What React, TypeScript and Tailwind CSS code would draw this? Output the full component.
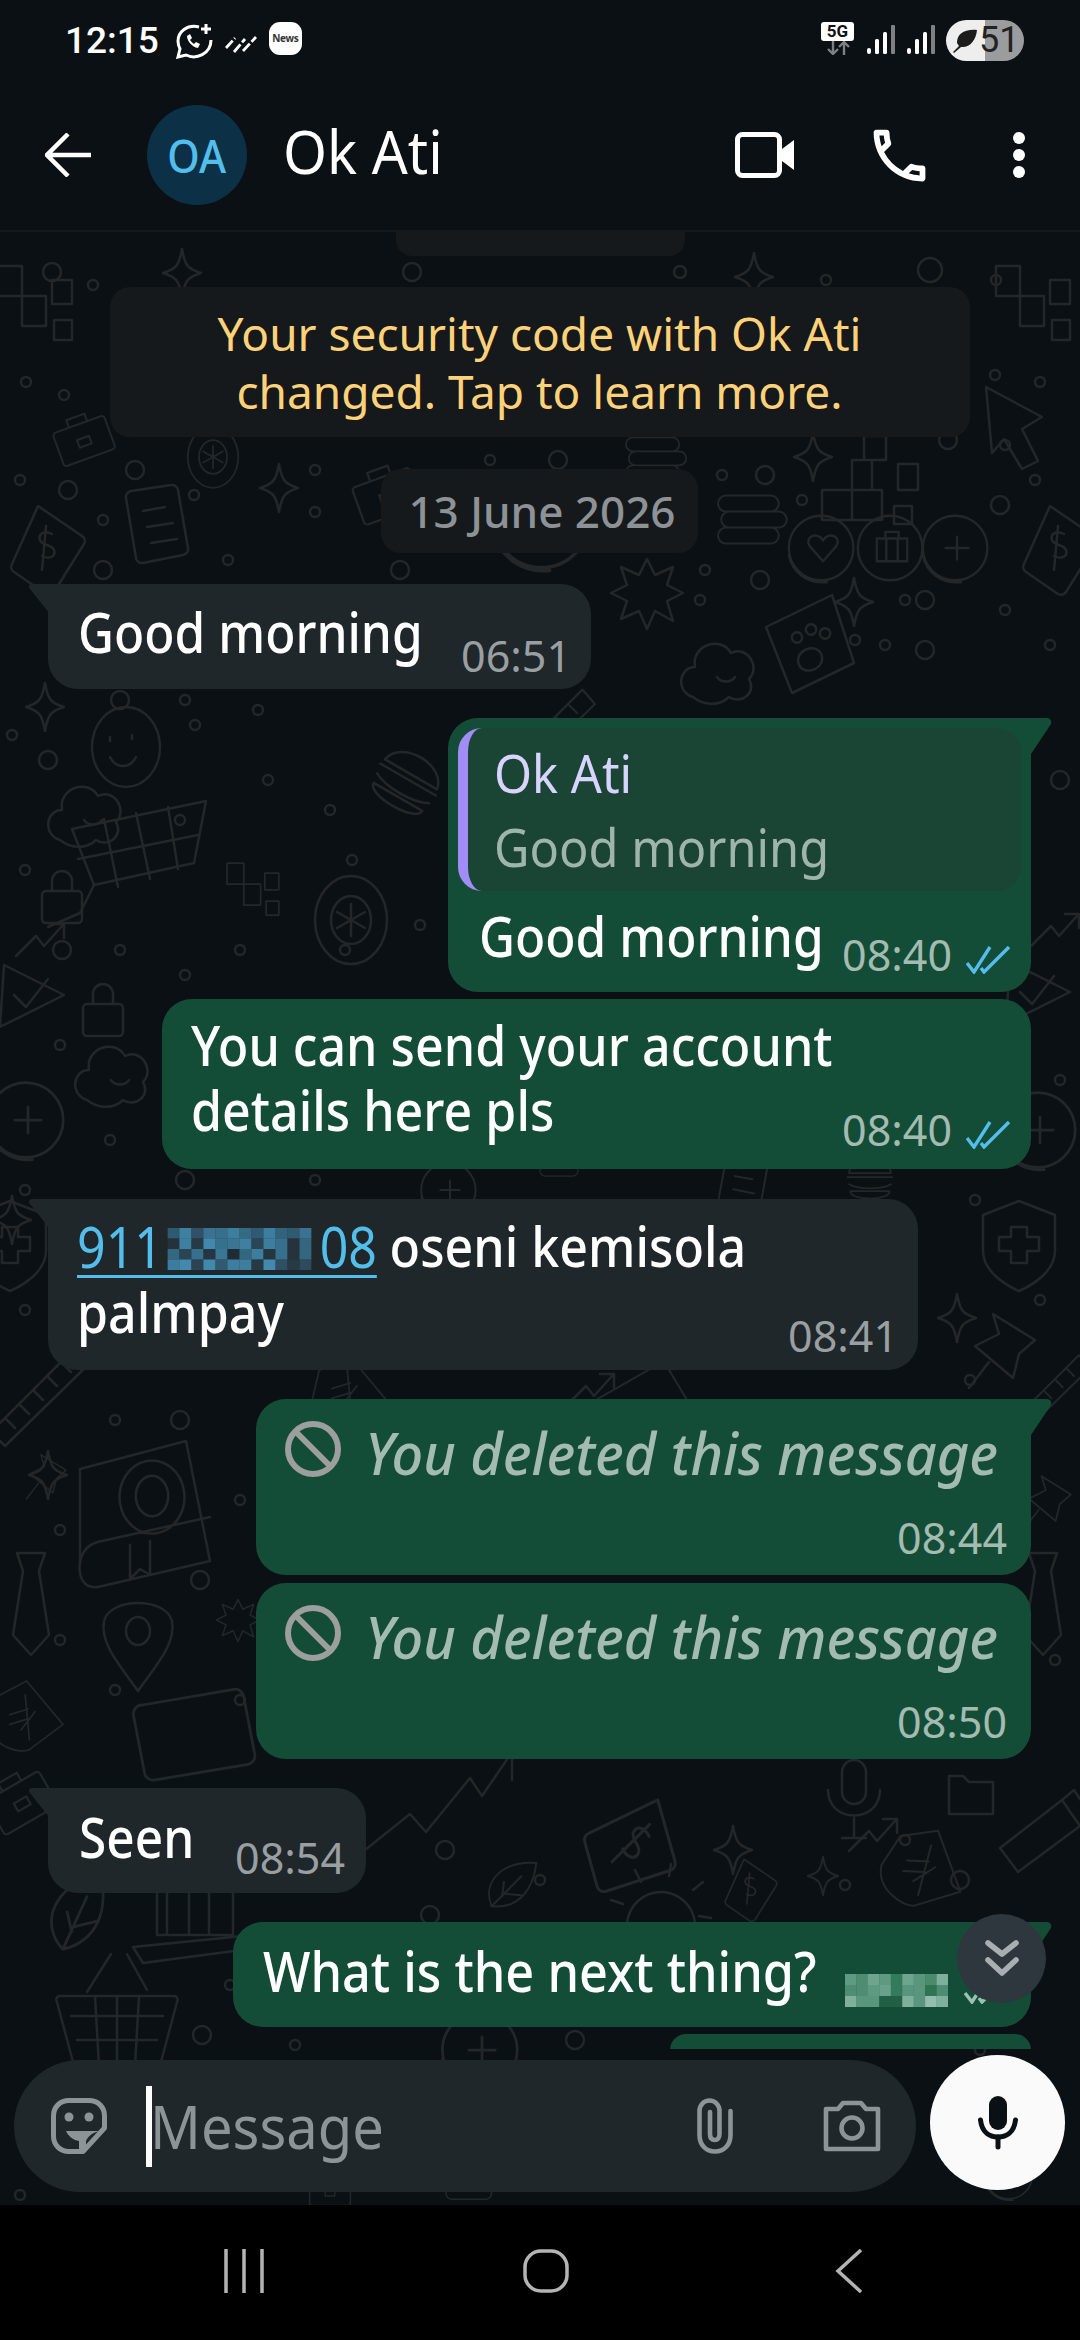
import React from "react";
import { MdOutlineCall } from "react-icons/md";

const FONT = "font-['Noto_Sans','Open_Sans',sans-serif]";

// wallpaper pieces, each drawn around 0,0
const shapes: Record<string, React.ReactNode> = {
  star: <path d="M0-24C3-7 6-4 19 0 6 4 3 7 0 24-3 7-6 4-19 0-6-4-3-7 0-24Z" />,
  burst: <path d="M0-34 8-18 26-26 20-8 36 0 20 8 26 28 8 18 0 36-8 18-26 26-20 8-36 0-20-8-26-26-8-18Z" />,
  steps: <path d="M-30-34h24v30h24v30h-24v-30h-24ZM24-20h20v24h-20ZM26 20h18v20h-18Z" />,
  cluster: <path d="M-46 10h30v30h-30ZM-16 10h30v30h-30ZM-16-20h20v30h-20ZM-4-44h22v24h-22ZM30-16h20v26h-20ZM26 26h18v18h-18Z" />,
  cursor: <path d="M-26-40 30-10 10 2 26 34 10 42-8 12-20 26Z" />,
  case: <path d="M-30-18h60a4 4 0 0 1 4 4v36a4 4 0 0 1-4 4h-60a4 4 0 0 1-4-4v-36a4 4 0 0 1 4-4ZM-12-18v-10h24v10M-8 0h16v10h-16Z" />,
  note: <path d="M-24-34 16-40a6 6 0 0 1 7 5l10 58a6 6 0 0 1-5 7L-12 38a6 6 0 0 1-7-5l-10-60a6 6 0 0 1 5-7ZM-12-14l22-4M-8 2l26-4M-4 18l26-4" />,
  tag: <path d="M-10-44 34-14a6 6 0 0 1 2 8L6 42a6 6 0 0 1-8 2L-34 22a6 6 0 0 1-2-8ZM4-16c-8-4-14 0-12 6s12 4 14 10-4 10-12 6M-2-24-6 20" />,
  coin: <path d="M-36 0a34 34 0 1 0 68 0a34 34 0 1 0-68 0ZM-36 8c4 18 20 30 40 28M-12 0h24M0-12v24" />,
  coinHeart: <path d="M-36 0a34 34 0 1 0 68 0a34 34 0 1 0-68 0ZM-36 8c4 18 20 30 40 28M0 14-14-2c-6-10 8-16 14-6 6-10 20-4 14 6Z" />,
  coinCase: <path d="M-36 0a34 34 0 1 0 68 0a34 34 0 1 0-68 0ZM-16-10h32v24h-32ZM-7-10v-7h14v7M-6-10v24M6-10v24" />,
  stack: <path d="M-30-28h56a10 10 0 0 1 0 20h-56a10 10 0 0 1 0-20ZM-26-8h62a10 10 0 0 1 0 20h-62a10 10 0 0 1 0-20ZM-30 12h56a10 10 0 0 1 0 20h-56a10 10 0 0 1 0-20Z" />,
  paw: <path d="M-40-20 26-52 48 16-14 46ZM-8 14c0-14 22-18 24-4s-22 20-24 4ZM-14-8a5 5 0 1 0 10-3a5 5 0 1 0-10 3ZM0-16a5 5 0 1 0 10-3a5 5 0 1 0-10 3ZM14-12a5 5 0 1 0 10-3a5 5 0 1 0-10 3Z" />,
  cloud: <path d="M-30 30c-18-6-14-30 2-30-4-22 26-32 36-14 16-8 30 14 18 26 8 14-8 26-20 18-10 10-26 8-36 0ZM-6 10c4 6 14 6 18 0" />,
  smile: <path d="M-32 0a34 40 0 1 0 68 0a34 40 0 1 0-68 0ZM-14-10v4M8-12v4M-14 10c6 12 20 12 26 0" />,
  cart: <path d="M-66-14 68-42 56 20-44 42ZM-34-24-20 44M-2-30 12 36M30-36 40 26M-60 16 60-8M-44 42-58 70M-58 70-90 84" />,
  flower: <path d="M-36 0a36 44 0 1 0 72 0a36 44 0 1 0-72 0ZM-20 0a20 24 0 1 0 40 0a20 24 0 1 0-40 0ZM0-16V16M-14-8 14 8M-14 8 14-8" />,
  lock: <path d="M-16-6h32a4 4 0 0 1 4 4v24a4 4 0 0 1-4 4h-32a4 4 0 0 1-4-4v-24a4 4 0 0 1 4-4ZM-10-6v-10a10 10 0 0 1 20 0v10" />,
  check: <path d="M-30-28 30 2M-30-28-34 34 30 2M-20 2-8 14 14-14" />,
  shield: <path d="M0-44 36-30V6C36 26 14 40 0 46-14 40-36 26-36 6V-30ZM-8-18h16v10h12v14h-12v12h-16v-12h-12v-14h12Z" />,
  pin: <path d="M-12-34 30-8 14 6 8 30-30-2-6-14ZM-16 14-36 40" />,
  ruler: <path d="M-50 30 36-56 50-40-36 44ZM-36 16l10 10M-22 2l10 10M-8-12 2-2M6-26l10 10M20-40l10 10" />,
  book: <path d="M-58-48 48-76 72 44-40 70C-54 72-60 60-58 46ZM-58 46C-56 32-48 26-36 24L72 0M-18-14a32 36 0 1 0 64-12a32 36 0 1 0-64 12ZM-2-18a16 20 0 1 0 32-6a16 20 0 1 0-32 6ZM-8 28v34l10-10 10 6V24" />,
  tie: <path d="M-14-44H14L8-26 18 38 0 58-18 38-8-26Z" />,
  loc: <path d="M0 48C-20 20-38 0-34-22-28-46 28-46 34-22 38 0 20 20 0 48ZM-12-12a12 14 0 1 0 24 0a12 14 0 1 0-24 0Z" />,
  basket: <path d="M-58-16H58a4 4 0 0 1 2 6L44 50a6 6 0 0 1-6 4H-38a6 6 0 0 1-6-4L-60-10a4 4 0 0 1 2-6ZM-46 4H46M-40 28H40M-22-16-18 54M22-16 18 54M0-16V54M-30-20-6-58M30-22 10-58" />,
  zig: <path d="M-80 46-30 6-14 24 30-30 42-12 68-50M48-52H72V-28" />,
  arrow: <path d="M-24 16-4-4 4 6 22-14M10-16H24V-2" />,
  bag: <path d="M-44-28-2-50 50 12 2 48C-10 54-50 46-54 14Z M10 -6-10 20M-4-30 2 34M-26-2l26-8M-26 12l26-8" />,
  leaf: <path d="M-12 34C-34 10-20-24 22-36 30-2 20 26-12 34ZM-12 34 10-14M-4 14 20 8M-8 0-4 18" />,
  laptop: <path d="M-36-42H40V12H-36ZM-60 24 60 12 56 26-50 40Z M-26-30V12M-4-34V12M16-36V12" />,
  gear: <path d="M-30 30A34 34 0 1 1 30 30M-14 30A14 14 0 1 1 14 30M-38-8l-12-4M-20-30l-6-12M8-36l2-12M32-22 42-30M38 4l12 2" />,
  mic: <path d="M-12-26a12 12 0 0 1 24 0v20a12 12 0 0 1-24 0ZM-26-8c0 34 52 34 52 0M0 20V40M-12 40H12" />,
  folder: <path d="M-22-18h14l6 6h24v32h-44Z" />,
  bottle: <path d="M-40 14 22-34 40-8-22 38ZM22-34 34-44 50-20 40-8" />,
  burger: <path d="M-30-10C-26-36 26-36 30-10ZM-32-4H32M-30 6C-16 14 16 14 30 6M-28 16H28C28 30-28 30-28 16Z" />,
  card: <path d="M-46-20 36-34a8 8 0 0 1 10 6L56 24a8 8 0 0 1-6 10L-34 48a8 8 0 0 1-10-6L-54-10a8 8 0 0 1 8-10Z" />,
};

const doodles: [string, number, number, number?, number?][] = [
  ["steps", 28, 300], ["steps", 1026, 300], ["star", 182, 273], ["star", 754, 277], ["star", 813, 457], ["star", 279, 488],
  ["star", 854, 602], ["star", 45, 707], ["star", 12, 1220], ["star", 957, 1318], ["star", 48, 1475], ["star", 733, 1850],
  ["star", 823, 1876, 0.8],
  ["cluster", 868, 480], ["cursor", 1012, 427], ["case", 83, 438, 0.8, -20], ["note", 155, 525], ["tag", 48, 550],
  ["tag", 1060, 550], ["coinHeart", 823, 548, 0.95], ["coinCase", 892, 548, 0.95], ["coin", 957, 548, 0.95],
  ["stack", 750, 518, 0.8], ["stack", 654, 457, 0.7], ["burst", 647, 593], ["paw", 806, 647], ["cloud", 723, 667],
  ["coin", 544, 520, 1.4], ["case", 386, 493, 0.9, -20], ["flower", 213, 457, 0.7],
  ["smile", 124, 747], ["cloud", 90, 810], ["cart", 138, 843], ["flower", 351, 920], ["burger", 406, 783, 1, 30],
  ["steps", 248, 887, 0.7], ["lock", 62, 897], ["lock", 103, 1010], ["check", 34, 993], ["cloud", 117, 1070],
  ["coin", 28, 1120, 1.1], ["coin", 1040, 1130, 1.1], ["arrow", 40, 940], ["arrow", 1055, 930], ["check", 1040, 990],
  ["shield", 10, 1245], ["shield", 1019, 1245], ["pin", 1005, 1348], ["ruler", 41, 1402], ["book", 138, 1517],
  ["tie", 31, 1597], ["tie", 1043, 1597], ["loc", 138, 1643], ["burst", 238, 1620, 0.6], ["ruler", 1050, 1400, 0.8],
  ["pin", 48, 1475, 0.6], ["card", 193, 1727, 1.1], ["bag", 28, 1716, 0.7], ["pin", 1050, 1500, 0.7],
  ["zig", 440, 1808], ["tag", 633, 1848, 1.2, 40], ["bag", 926, 1869, 0.8, 20], ["basket", 117, 2012], ["leaf", 76, 1912, 1.1],
  ["laptop", 193, 1923], ["mic", 854, 1798], ["gear", 661, 1912], ["leaf", 510, 1884, 0.8, 20], ["tag", 751, 1890, 0.7],
  ["folder", 971, 1794], ["bottle", 1040, 1834], ["coin", 482, 2050, 1.1], ["case", 20, 1800, 0.9, -30], ["arrow", 873, 1835],
  ["case", 330, 2190, 0.6], ["stack", 470, 2180, 0.6], ["coin", 1010, 2175, 0.7], ["stack", 560, 1160, 0.5],
  ["burger", 870, 1180, 0.7], ["note", 740, 1190, 0.8, 20], ["card", 640, 1400, 0.8, -20], ["bag", 350, 1390, 0.7],
  ["arrow", 590, 1390], ["ruler", 550, 740, 0.9], ["check", 380, 1040, 0.7], ["coin", 450, 1190, 0.8],
];

const dots: [number, number, number][] = [
  [52, 272, 9], [93, 285, 5], [412, 272, 9], [680, 272, 6], [826, 280, 5], [930, 270, 12], [996, 280, 5], [26, 382, 5], [64, 395, 5],
  [995, 375, 5], [1040, 382, 5], [948, 440, 9], [1005, 445, 5], [20, 480, 5], [68, 490, 9], [135, 470, 9], [194, 495, 5],
  [315, 470, 5], [490, 460, 5], [558, 460, 9], [722, 475, 5], [765, 475, 9], [1035, 480, 5], [103, 520, 5], [315, 512, 5],
  [802, 500, 5], [1000, 505, 9], [390, 520, 5], [228, 560, 5], [400, 570, 9], [103, 570, 9], [760, 580, 9], [705, 570, 5], [905, 600, 5], [925, 600, 9],
  [1005, 610, 5], [1050, 645, 5], [885, 645, 5], [925, 650, 9], [855, 640, 5], [700, 600, 5], [120, 700, 9], [185, 700, 5], [258, 710, 5],
  [48, 760, 9], [12, 735, 5], [195, 725, 5], [330, 810, 5], [352, 860, 5], [268, 780, 5], [180, 820, 5], [345, 950, 5], [25, 870, 5], [62, 950, 9],
  [1010, 800, 5], [1060, 780, 9], [420, 925, 5], [185, 975, 5], [120, 950, 5], [340, 1020, 9], [240, 950, 5], [1060, 1080, 5], [60, 1045, 5],
  [110, 1140, 5], [185, 1180, 9], [315, 1180, 5], [25, 1190, 5], [975, 1200, 5], [1040, 1300, 5], [25, 1310, 5], [970, 1380, 5],
  [115, 1420, 5], [180, 1420, 9], [60, 1530, 5], [240, 1500, 5], [200, 1580, 9], [60, 1640, 5], [240, 1700, 5], [115, 1690, 5], [1055, 1660, 5],
  [445, 1850, 9], [540, 1880, 5], [905, 1840, 5], [845, 1885, 5], [230, 1985, 5], [202, 2035, 9], [295, 2045, 5], [430, 1915, 9],
  [490, 2010, 9], [575, 2040, 9], [960, 1880, 9], [980, 2050, 5], [20, 2195, 5],
];

function Wallpaper() {
  return (
    <svg className="absolute inset-0 h-full w-full" viewBox="0 232 1080 1973" fill="none" stroke="#23272a" strokeWidth="2.5" strokeLinejoin="round" strokeLinecap="round">
      {doodles.map(([name, x, y, s = 1, r = 0], i) => (
        <g key={i} transform={`translate(${x} ${y}) rotate(${r}) scale(${s})`}>{shapes[name]}</g>
      ))}
      {dots.map(([x, y, r], i) => (
        <circle key={i} cx={x} cy={y} r={r} />
      ))}
    </svg>
  );
}

function Mosaic({ w, h, grid }: { w: number; h: number; grid: string[][] }) {
  return (
    <svg width={w} height={h} viewBox={`0 0 ${grid[0].length} ${grid.length}`} preserveAspectRatio="none" className="block shrink-0">
      {grid.map((row, r) => row.map((fill, c) => <rect key={`${r}-${c}`} x={c} y={r} width="1.02" height="1.02" fill={fill} />))}
    </svg>
  );
}

const phoneBlur = [
  ["#2e5a70", "#3f80a0", "#2f5066", "#3a7291", "#37708c", "#3d7e9f", "#356a84", "#2f5a73", "#3d7e9f", "#33627c", "#2f5a70", "#3a7290"],
  ["#26323b", "#3f80a0", "#263a45", "#4288ad", "#37708c", "#3a7594", "#3f7f9f", "#2a4656", "#3d7e9f", "#37708c", "#26333c", "#35667f"],
  ["#336880", "#2b4453", "#37708c", "#263541", "#3a7594", "#1f2c33", "#33667f", "#3d7e9f", "#26363f", "#37708c", "#26333c", "#35667f"],
  ["#3a7da0", "#4289ad", "#2b4453", "#4389ad", "#2f5a70", "#3d7e9f", "#3d7e9f", "#263a45", "#4389ad", "#2f5064", "#263a45", "#2c4c5c"],
];

const timeBlur = [
  ["#5f9a82", "#4f8c72", "#6fa58e", "#5e9a81", "#347a5c", "#6fa58e", "#5a967d", "#4a8a6d", "#7fb09b"],
  ["#4f8c72", "#4f8c72", "#5e9a81", "#6aa18a", "#347a5c", "#5a967d", "#5a967d", "#2f7355", "#4f8c72"],
  ["#7fb09b", "#5a967d", "#5a967d", "#235f45", "#235f45", "#7fb09b", "#5a967d", "#93bdac", "#7fb09b"],
];

function Ticks({ color = "#53bdeb" }: { color?: string }) {
  return (
    <svg width="44" height="28" viewBox="0 0 44 28" fill="none" stroke={color} strokeWidth="3.4" className="ml-[14px] mb-[2px]">
      <path d="M1 17 8 26 24 1" />
      <path d="M15 22 18 26 43 1" />
    </svg>
  );
}

function Time({ children, out = false }: { children: React.ReactNode; out?: boolean }) {
  return <span className={`text-[43px] leading-[42px] whitespace-nowrap ${out ? "text-[#a3bbb0]" : "text-[#9a9fa2]"}`}>{children}</span>;
}

function InTail() {
  return (
    <svg width="24" height="34" viewBox="0 0 24 34" className="absolute left-[-19px] top-0" fill="#1f272a">
      <path d="M24 0H3C0 0-1 3 1 5L24 34Z" />
    </svg>
  );
}

function OutTail() {
  return (
    <svg width="24" height="36" viewBox="0 0 24 36" className="absolute right-[-21px] top-0" fill="#144d37">
      <path d="M0 0H19C22 0 24 3 23 6L3 36H0Z" />
    </svg>
  );
}

// message text: the phone's face is narrower than Noto Sans, so squeeze it a little
function Msg({ children, className = "", wide = false }: { children: React.ReactNode; className?: string; wide?: boolean }) {
  return <div className={`shrink-0 origin-left whitespace-nowrap text-[56px] font-medium ${wide ? "scale-x-[0.895]" : "scale-x-[0.885]"} ${className}`}>{children}</div>;
}

function Deleted({ time, tail }: { time: string; tail?: boolean }) {
  return (
    <div className={`relative h-[176px] w-[775px] self-end rounded-[30px] bg-[#144d37] pl-[28px] pt-[21px] ${tail ? "rounded-tr-none" : ""}`}>
      {tail && <OutTail />}
      <div className="flex items-start">
        <svg width="58" height="58" viewBox="0 0 58 58" fill="none" stroke="#9d9f9e" strokeWidth="6" className="shrink-0">
          <circle cx="29" cy="29" r="25" />
          <path d="M11 11 47 47" />
        </svg>
        <div className="ml-[23px] w-[632px] origin-left scale-x-[0.96] whitespace-nowrap text-[58px] leading-[68px] font-medium italic text-[#a3bbb0] mt-[-1px]">You deleted this message</div>
      </div>
      <div className="absolute bottom-[15px] right-[24px]">
        <Time out>{time}</Time>
      </div>
    </div>
  );
}

function StatusBar() {
  return (
    <div className="flex h-[76px] items-start pt-[22px] pl-[65px] pr-[56px] text-white">
      <span className="font-['Roboto',sans-serif] text-[37px] leading-[38px] font-medium">12:15</span>
      <svg width="38" height="36" viewBox="0 0 38 36" fill="none" stroke="#fff" strokeWidth="3" className="ml-[16px] mt-[1px]">
        <path d="M24 4C12 1 3 9 3 18c0 3 1 6 2 8l-2 8 8-2c10 5 25-1 25-15" />
        <path d="M31 1v10M26 6h10" />
        <path d="M12 13c0 5 5 11 11 12l2-4-4-2-2 2c-2-1-3-3-4-4l2-2-2-4Z" fill="#fff" stroke="none" />
      </svg>
      <svg width="32" height="18" viewBox="0 0 32 18" stroke="#fff" strokeWidth="2.8" strokeDasharray="10 2.5" className="ml-[12px] mt-[13px]">
        <path d="M1 13 10 3M9 17 20 4M18 16 31 2" />
      </svg>
      <div className="ml-[12px] flex h-[33px] w-[33px] items-center justify-center rounded-[11px] bg-white text-[10px] font-bold tracking-[-0.3px] text-[#333]">News</div>
      <div className="ml-auto flex items-start">
        <div className="flex w-[33px] flex-col items-center">
          <span className="flex h-[19px] w-[33px] items-center justify-center rounded-[3px] bg-white font-['Roboto',sans-serif] text-[17px] leading-[19px] font-bold text-[#111]">5G</span>
          <svg width="24" height="14" viewBox="0 0 24 14" fill="none" stroke="#7e8183" strokeWidth="2.4">
            <path d="M7 0V13M2 8l5 5 5-5M18 14V1M13 6l5-5 5 5" />
          </svg>
        </div>
        {[0, 1].map((i) => (
          <svg key={i} width="28" height="30" viewBox="0 0 28 30" className={`mt-[3px] ${i === 0 ? "ml-[13px]" : "ml-[12px]"}`}>
            <rect x="0" y="23" width="4" height="6" rx="2" fill="#fff" />
            <rect x="8" y="14" width="4" height="15" rx="1.5" fill="#fff" />
            <rect x="16" y="7" width="4" height="22" rx="1.5" fill="#fff" />
            <rect x="24" y="0" width="4" height="29" rx="1" fill="#7e8183" />
          </svg>
        ))}
        <div className="relative ml-[11px] mt-[-2px] flex h-[41px] w-[78px] items-center overflow-hidden rounded-full bg-[linear-gradient(90deg,#eeeeee_50%,#9b9c9e_50%)] text-[#222]">
          <svg width="26" height="26" viewBox="0 0 26 26" className="ml-[6px]" fill="#1c1c1c">
            <path d="M25 2C12 1 5 6 5 15l2 3L1 24l1 1 7-6c9 1 15-7 16-17Z" />
          </svg>
          <span className="ml-[1px] font-['Roboto',sans-serif] text-[36px] leading-[41px]">51</span>
        </div>
      </div>
    </div>
  );
}

function Header() {
  return (
    <div className="h-[232px] shrink-0 border-b-2 border-[#15191c] bg-[#0b1014]">
      <StatusBar />
      <div className="flex h-[100px] items-center mt-[29px] pl-[45px] text-white">
        <svg width="46" height="44" viewBox="0 0 46 44" fill="none" stroke="#fff" strokeWidth="4.5" strokeLinejoin="miter">
          <path d="M46 22H3M23 1 2 22l21 21" />
        </svg>
        <div className="ml-[56px] flex h-[100px] w-[100px] items-center justify-center rounded-full bg-[#0c3146]">
          <span className="scale-x-[0.9] text-[46px] font-medium text-[#53bdeb]">OA</span>
        </div>
        <span className="ml-[36px] w-[157px] shrink-0 origin-left scale-x-[0.94] whitespace-nowrap text-[60px] leading-[70px] -mt-[9px]">Ok Ati</span>
        <svg width="60" height="46" viewBox="0 0 60 46" fill="none" className="ml-[295px]">
          <rect x="2.5" y="2.5" width="42" height="41" rx="5" stroke="#fff" strokeWidth="5" />
          <path d="M47 17 59 8V38L47 29Z" fill="#fff" />
        </svg>
        <MdOutlineCall className="ml-[70px] text-[69px]" />
        <svg width="14" height="46" viewBox="0 0 14 46" fill="#fff" className="ml-[78px]">
          <circle cx="7" cy="6" r="6" />
          <circle cx="7" cy="23" r="6" />
          <circle cx="7" cy="40" r="6" />
        </svg>
      </div>
    </div>
  );
}

function Composer() {
  return (
    <div className="relative flex items-start pl-[14px]">
      <div className="mt-[11px] flex h-[132px] w-[902px] items-center rounded-[66px] bg-[#1f272a] pl-[37px]">
        <svg width="56" height="56" viewBox="0 0 56 56" fill="none" stroke="#8c9498" strokeWidth="5" strokeLinejoin="round" className="shrink-0">
          <path d="M18 2.5H38C47 2.5 53.5 9 53.5 18V30L32 53.5H18C9 53.5 2.5 47 2.5 38V18C2.5 9 9 2.5 18 2.5Z" />
          <circle cx="18" cy="19" r="4.5" fill="#8c9498" stroke="none" />
          <circle cx="38" cy="19" r="4.5" fill="#8c9498" stroke="none" />
          <path d="M15 33H50C42 34 37 38 35 43V52H28V43C22 42 17 38 15 33Z" fill="#8c9498" stroke="none" />
        </svg>
        <div className="ml-[39px] h-[81px] w-[6px] shrink-0 bg-white" />
        <span className="-ml-[2px] w-[230px] shrink-0 origin-left scale-x-[0.935] whitespace-nowrap text-[60px] leading-[70px] text-[#8c9498]">Message</span>
        <svg width="36" height="56" viewBox="0 0 36 56" fill="none" stroke="#8c9498" strokeWidth="4.6" strokeLinecap="round" className="ml-[317px] shrink-0">
          <path d="M33.5 13V37C33.5 47 27 53.5 18 53.5 9 53.5 2.5 47 2.5 37V13C2.5 7 7 2.5 12.5 2.5 18 2.5 22.5 7 22.5 13V36C22.5 40 20.5 42 18 42 15 42 13 40 13 36V14" />
        </svg>
        <svg width="58" height="52" viewBox="0 0 58 52" fill="none" stroke="#8c9498" strokeWidth="4.6" strokeLinejoin="round" className="ml-[90px] shrink-0">
          <path d="M3 9H15L20 3H38L43 9H55V49H3Z" />
          <circle cx="29" cy="28" r="10.5" />
        </svg>
      </div>
      <div className="ml-[14px] mt-[6px] flex h-[135px] w-[135px] items-center justify-center rounded-full bg-[#fafafa]">
        <svg width="40" height="54" viewBox="0 0 40 54" fill="none" stroke="#0b1014" strokeWidth="5" strokeLinecap="round">
          <rect x="11" y="0" width="18" height="34" rx="9" fill="#0b1014" stroke="none" />
          <path d="M2.5 24C4 37 12 41 20 41S36 37 37.5 24" />
          <path d="M20 41V51" />
        </svg>
      </div>
    </div>
  );
}

function NavBar() {
  return (
    <div className="relative h-[135px] shrink-0 bg-black">
      <div className="flex h-full items-start pt-[44px] pl-[224px]">
        <svg width="40" height="44" viewBox="0 0 40 44" stroke="#b4b4b4" strokeWidth="3.5">
          <path d="M2 0V44M20 0V44M38 0V44" />
        </svg>
        <svg width="46" height="44" viewBox="0 0 46 44" fill="none" stroke="#b4b4b4" strokeWidth="3.5" className="ml-[259px]">
          <rect x="2" y="2" width="42" height="40" rx="16" />
        </svg>
        <svg width="28" height="44" viewBox="0 0 28 44" fill="none" stroke="#b4b4b4" strokeWidth="3.5" className="ml-[266px]">
          <path d="M26 1 3 22 26 43" />
        </svg>
      </div>
    </div>
  );
}

export default function App() {
  return (
    <div className={`flex h-[2340px] w-[1080px] flex-col overflow-hidden bg-[#0b1014] ${FONT}`}>
      <Header />
      <main className="relative flex flex-1 flex-col">
        <Wallpaper />
        <div className="relative flex h-[1817px] flex-col overflow-hidden pl-[48px] pr-[49px] text-white">
          <div className="ml-[348px] h-[24px] w-[289px] shrink-0 rounded-b-[16px] bg-[#15191c]" />

          <div className="mt-[31px] flex h-[150px] w-[860px] shrink-0 items-center justify-center self-center rounded-[20px] bg-[#15191c] text-center text-[46px] leading-[58px] text-[#ffd279]">
            Your security code with Ok Ati
            <br />
            changed. Tap to learn more.
          </div>

          <div className="mt-[32px] flex h-[84px] w-[317px] shrink-0 items-center justify-center self-center rounded-[20px] bg-[#15191c] pl-[5px] text-[44px] font-medium text-[#8d9296]">13 June 2026</div>

          <div className="relative mt-[31px] flex h-[105px] w-[543px] shrink-0 items-end rounded-[30px] rounded-tl-none bg-[#1f272a] pl-[30px] pr-[20px]">
            <InTail />
            <Msg className="mb-[25px] w-[340px] leading-[66px]">Good morning</Msg>
            <span className="mb-[11px] ml-auto"><Time>06:51</Time></span>
          </div>

          <div className="relative mt-[29px] h-[274px] w-[583px] shrink-0 self-end rounded-[30px] rounded-tr-none bg-[#144d37] p-[10px]">
            <OutTail />
            <div className="h-[163px] overflow-hidden rounded-[24px] border-l-[10px] border-[#a28cf5] bg-[#1a4534] pl-[26px] pt-[8px] leading-[74px]">
              <div className="origin-left scale-x-[0.92] whitespace-nowrap text-[53px] text-[#d8d4ff]">Ok Ati</div>
              <div className="origin-left scale-x-[0.92] whitespace-nowrap text-[53px] text-[#9fb5ab]">Good morning</div>
            </div>
            <div className="flex items-end pl-[21px] pr-[11px] pt-[11px]">
              <Msg className="w-[340px] leading-[66px]">Good morning</Msg>
              <span className="ml-auto mb-[-8px] flex items-end"><Time out>08:40</Time><Ticks /></span>
            </div>
          </div>

          <div className="relative mt-[7px] flex h-[170px] w-[869px] shrink-0 flex-col self-end rounded-[30px] bg-[#144d37] pl-[29px] pr-[23px] pt-[13px]">
            <Msg wide className="leading-[65px]">You can send your account<br />details here pls</Msg>
            <span className="absolute bottom-[18px] right-[21px] flex items-end"><Time out>08:40</Time><Ticks /></span>
          </div>

          <div className="relative mt-[30px] h-[171px] w-[870px] shrink-0 rounded-[30px] rounded-tl-none bg-[#1f272a] pl-[29px] pt-[13px]">
            <InTail />
            <Msg wide className="leading-[66px]">
              <div className="flex h-[66px] items-start">
                <span className="mt-[8px] flex h-[58px] items-start border-b-[3px] border-[#53bdeb] font-normal leading-[52px] text-[#53bdeb]">
                  911
                  <span className="ml-[5px] mr-[9px] mt-[8px]"><Mosaic w={161} h={42} grid={phoneBlur} /></span>
                  08
                </span>
                <span className="ml-[14px]">oseni kemisola</span>
              </div>
              <div>palmpay</div>
            </Msg>
            <span className="absolute bottom-[12px] right-[20px]"><Time>08:41</Time></span>
          </div>

          <div className="mt-[29px] flex shrink-0 flex-col">
            <Deleted time="08:44" tail />
          </div>
          <div className="mt-[8px] flex shrink-0 flex-col">
            <Deleted time="08:50" />
          </div>

          <div className="relative mt-[29px] flex h-[105px] w-[318px] shrink-0 items-end rounded-[30px] rounded-tl-none bg-[#1f272a] pl-[31px] pr-[21px]">
            <InTail />
            <Msg className="mb-[24px] w-[114px] leading-[66px]">Seen</Msg>
            <span className="mb-[13px] ml-auto"><Time>08:54</Time></span>
          </div>

          <div className="relative mt-[29px] flex h-[105px] w-[798px] shrink-0 items-center self-end rounded-[30px] rounded-tr-none bg-[#144d37] pl-[30px]">
            <OutTail />
            <div className="mb-[10px] shrink-0 origin-left scale-x-[0.9] whitespace-nowrap text-[56px] leading-[66px] font-medium">What is the next thing?</div>
            <div className="absolute right-[83px] top-[52px]">
              <Mosaic w={103} h={33} grid={timeBlur} />
            </div>
            <div className="absolute right-[23px] top-[54px]">
              <Ticks color="#9cc0b1" />
            </div>
          </div>

          <div className="mt-[7px] h-[16px] w-[361px] shrink-0 self-end rounded-t-[30px] bg-[#144d37]" />
        </div>

        <div className="absolute left-[957px] top-[1682px] flex h-[89px] w-[89px] items-center justify-center rounded-full bg-[#2f373e]">
          <svg width="34" height="37" viewBox="0 0 34 37" fill="none" stroke="#a8afb3" strokeWidth="5.6" strokeLinecap="round" strokeLinejoin="round">
            <path d="M3 3 17 14 31 3" />
            <path d="M3 20 17 33 31 20" />
          </svg>
        </div>

        <Composer />
      </main>
      <NavBar />
    </div>
  );
}
